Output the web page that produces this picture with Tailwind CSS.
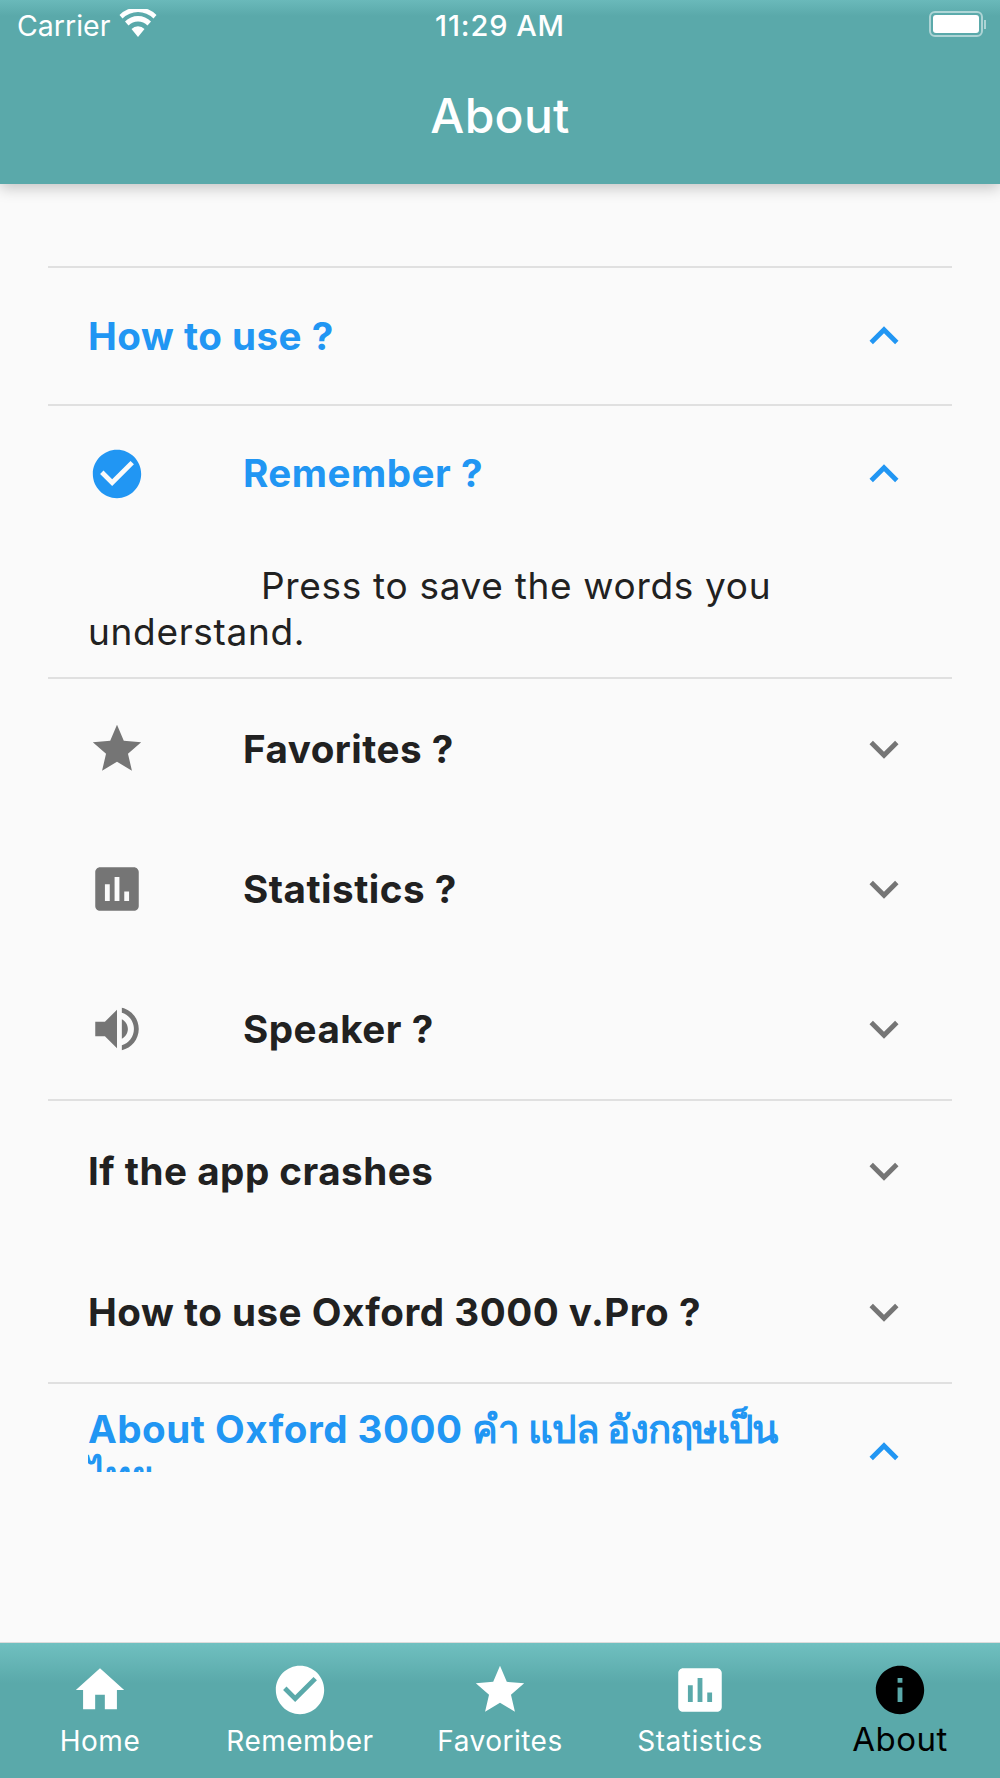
<!DOCTYPE html>
<html><head><meta charset="utf-8"><script src="https://cdn.jsdelivr.net/npm/@tailwindcss/browser@4"></script></head>
<body class="m-0 bg-[#fafafa]">
<div class="w-[1000px] h-[1778px] flex flex-col overflow-hidden font-['Inter','Noto_Sans','DejaVu_Sans',sans-serif] text-[#212121]">
  <header class="relative z-10 h-[184px] shrink-0 bg-[#5aa9aa] text-white shadow-[0_4px_14px_rgba(0,0,0,0.22)] bg-[linear-gradient(#6ab9ba_0px,#5aa9aa_16px)]">
    <div class="h-[52px] relative flex items-center">
      <span class="absolute left-[17px] top-[9px] text-[28.5px] leading-[34px]">Carrier</span>
      <svg class="absolute left-[119px] top-[9px]" width="38" height="30" viewBox="0 0 38 30" fill="#fff"><path d="M19 28 L12.5 20 A9 9 0 0 1 25.5 20Z"/><path d="M9.5 16.5 L6 12.5 A18 18 0 0 1 32 12.5 L28.5 16.5 A13.5 13.5 0 0 0 9.5 16.5Z"/><path d="M3.5 9.5 L0.5 6 A26 26 0 0 1 37.5 6 L34.5 9.5 A22 22 0 0 0 3.5 9.5Z"/></svg>
      <span class="absolute left-[435px] top-[9px] text-[29px] leading-[34px] font-medium tracking-[0.9px] [word-spacing:-1px]">11:29 AM</span>
      <div class="absolute left-[929px] top-[11px] w-[54px] h-[26px] rounded-[6px] border-2 border-white/50 p-[2px]"><div class="w-full h-full rounded-[3px] bg-white"></div></div>
      <div class="absolute left-[984px] top-[20px] w-[2px] h-[9px] bg-white/50"></div>
    </div>
    <h1 class="text-center text-[48px] leading-[60px] font-medium mt-[34px] tracking-[0.3px]">About</h1>
  </header>
  <main class="flex-1 px-[48px] pt-[82px] overflow-hidden tracking-[0.5px]">
    <section class="border-t-2 border-[#e0e0e0]">
      <div class="h-[136px] flex items-center pl-[40px] pr-[39px] justify-between text-[#2196f3]">
        <span class="pt-[2px] text-[38.6px] font-[650]">How to use ?</span>
        <svg width="58" height="58" viewBox="0 0 24 24" fill="#2196f3"><path d="M12 8l-6 6 1.41 1.41L12 10.83l4.59 4.58L18 14z"/></svg>
      </div>
    </section>
    <section class="border-t-2 border-[#e0e0e0]">
      <div class="h-[136px] flex items-center pl-[40px] pr-[39px] text-[#2196f3]">
        <svg class="w-[58px] mr-[96px]" width="58" height="58" viewBox="0 0 24 24" fill="#2196f3"><path d="M12 2C6.48 2 2 6.48 2 12s4.48 10 10 10 10-4.48 10-10S17.52 2 12 2zm-2 15l-5-5 1.41-1.41L10 14.17l7.59-7.59L19 8l-9 9z"/></svg>
        <span class="flex-1 pl-[1px] text-[38.6px] font-[650]">Remember ?</span>
        <svg width="58" height="58" viewBox="0 0 24 24" fill="#2196f3"><path d="M12 8l-6 6 1.41 1.41L12 10.83l4.59 4.58L18 14z"/></svg>
      </div>
      <p class="pl-[40px] pr-[48px] pt-[21px] pb-[22px] text-[37px] leading-[46px] font-normal tracking-[0.68px] indent-[173px]">Press to save the words you understand.</p>
    </section>
    <section class="border-t-2 border-[#e0e0e0]">
      <div class="h-[140px] flex items-center pl-[40px] pr-[39px]">
        <svg class="mr-[96px]" width="58" height="58" viewBox="0 0 24 24" fill="#757575"><path d="M12 17.27L18.18 21l-1.64-7.03L22 9.24l-7.19-.61L12 2 9.19 8.63 2 9.24l5.46 4.73L5.82 21z"/></svg>
        <span class="flex-1 pl-[1px] pt-[1px] text-[38.6px] font-[650]">Favorites ?</span>
        <svg width="58" height="58" viewBox="0 0 24 24" fill="#757575"><path d="M16.59 8.59L12 13.17 7.41 8.59 6 10l6 6 6-6z"/></svg>
      </div>
      <div class="h-[140px] flex items-center pl-[40px] pr-[39px]">
        <svg class="mr-[96px]" width="58" height="58" viewBox="0 0 24 24" fill="#757575"><path d="M19 3H5c-1.1 0-2 .9-2 2v14c0 1.1.9 2 2 2h14c1.1 0 2-.9 2-2V5c0-1.1-.9-2-2-2zM9 17H7v-7h2v7zm4 0h-2V7h2v10zm4 0h-2v-4h2v4z"/></svg>
        <span class="flex-1 pl-[1px] pt-[2px] text-[38.6px] font-[650]">Statistics ?</span>
        <svg width="58" height="58" viewBox="0 0 24 24" fill="#757575"><path d="M16.59 8.59L12 13.17 7.41 8.59 6 10l6 6 6-6z"/></svg>
      </div>
      <div class="h-[140px] flex items-center pl-[40px] pr-[39px]">
        <svg class="mr-[96px]" width="58" height="58" viewBox="0 0 24 24" fill="#757575"><path d="M3 9v6h4l5 5V4L7 9H3zm13.5 3c0-1.77-1.02-3.29-2.5-4.03v8.05c1.48-.73 2.5-2.25 2.5-4.02zM14 3.23v2.06c2.89.86 5 3.54 5 6.71s-2.11 5.85-5 6.71v2.06c4.01-.91 7-4.49 7-8.77s-2.99-7.86-7-8.77z"/></svg>
        <span class="flex-1 pl-[1px] pt-[2px] text-[38.6px] font-[650]">Speaker ?</span>
        <svg width="58" height="58" viewBox="0 0 24 24" fill="#757575"><path d="M16.59 8.59L12 13.17 7.41 8.59 6 10l6 6 6-6z"/></svg>
      </div>
    </section>
    <section class="border-t-2 border-[#e0e0e0]">
      <div class="h-[140px] flex items-center pl-[40px] pr-[39px] justify-between">
        <span class="pt-[2px] text-[38.6px] font-[650]">If the app crashes</span>
        <svg width="58" height="58" viewBox="0 0 24 24" fill="#757575"><path d="M16.59 8.59L12 13.17 7.41 8.59 6 10l6 6 6-6z"/></svg>
      </div>
      <div class="h-[141px] flex items-center pl-[40px] pr-[39px] justify-between">
        <span class="pt-[2px] text-[38.6px] font-[650]">How to use Oxford 3000 v.Pro ?</span>
        <svg width="58" height="58" viewBox="0 0 24 24" fill="#757575"><path d="M16.59 8.59L12 13.17 7.41 8.59 6 10l6 6 6-6z"/></svg>
      </div>
    </section>
    <section class="border-t-2 border-[#e0e0e0]">
      <div class="h-[135px] flex items-center pl-[40px] pr-[39px] text-[#2196f3]">
        <div class="flex-1 h-[92px]">
          <div class="h-[66px] overflow-hidden text-[38.6px] leading-[46px] font-[650] pr-[20px]">About Oxford 3000 <span class="tracking-[-0.7px]">คำ แปล อังกฤษเป็น ไทย</span></div>
        </div>
        <svg width="58" height="58" viewBox="0 0 24 24" fill="#2196f3"><path d="M12 8l-6 6 1.41 1.41L12 10.83l4.59 4.58L18 14z"/></svg>
      </div>
    </section>
  </main>
  <nav class="relative h-[136px] shrink-0 border-t border-[#dcdcdc] bg-[linear-gradient(#70c0c0_0px,#5aa9aa_40px)] flex text-white text-[28px] tracking-[0.5px] leading-[34px] pt-[18px]">
    <a class="flex-1 flex flex-col items-center"><svg width="58" height="58" viewBox="0 0 24 24" fill="#fff"><path d="M10 20v-6h4v6h5v-8h3L12 3 2 12h3v8z"/></svg><span class="mt-[5px]">Home</span></a>
    <a class="flex-1 flex flex-col items-center"><svg width="58" height="58" viewBox="0 0 24 24" fill="#fff"><path d="M12 2C6.48 2 2 6.48 2 12s4.48 10 10 10 10-4.48 10-10S17.52 2 12 2zm-2 15l-5-5 1.41-1.41L10 14.17l7.59-7.59L19 8l-9 9z"/></svg><span class="mt-[5px]">Remember</span></a>
    <a class="flex-1 flex flex-col items-center"><svg width="58" height="58" viewBox="0 0 24 24" fill="#fff"><path d="M12 17.27L18.18 21l-1.64-7.03L22 9.24l-7.19-.61L12 2 9.19 8.63 2 9.24l5.46 4.73L5.82 21z"/></svg><span class="mt-[5px]">Favorites</span></a>
    <a class="flex-1 flex flex-col items-center"><svg width="58" height="58" viewBox="0 0 24 24" fill="#fff"><path d="M19 3H5c-1.1 0-2 .9-2 2v14c0 1.1.9 2 2 2h14c1.1 0 2-.9 2-2V5c0-1.1-.9-2-2-2zM9 17H7v-7h2v7zm4 0h-2V7h2v10zm4 0h-2v-4h2v4z"/></svg><span class="mt-[5px]">Statistics</span></a>
    <a class="flex-1 flex flex-col items-center text-black text-[33px]"><svg width="58" height="58" viewBox="0 0 24 24" fill="#000"><path d="M12 2C6.48 2 2 6.48 2 12s4.48 10 10 10 10-4.48 10-10S17.52 2 12 2zm1 15h-2v-6h2v6zm0-8h-2V7h2v2z"/></svg><span class="mt-[3px]">About</span></a>
  </nav>
</div>
</body></html>
